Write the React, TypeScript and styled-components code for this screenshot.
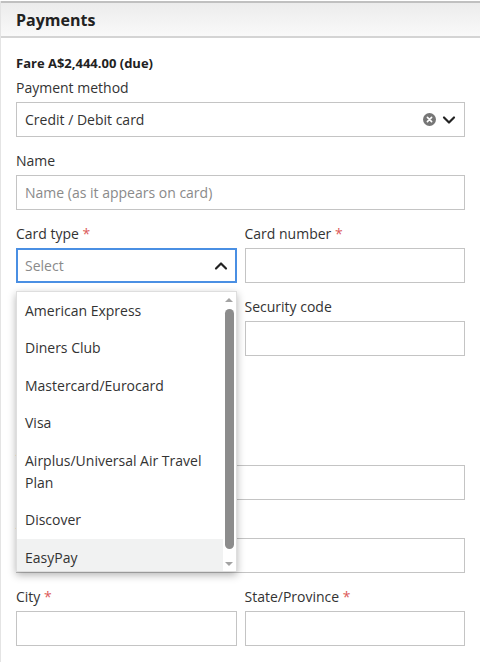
import styled, { createGlobalStyle } from "styled-components";
import { ChevronDown, ChevronUp } from "lucide-react";

const GlobalStyle = createGlobalStyle`
    body {
        margin: 0;
        background: #fff;
        font-family: "Open Sans", "Liberation Sans", sans-serif;
        color: #333;
    }
    * {
        box-sizing: border-box;
    }
`;

const Page = styled.div`
    min-height: 662px;
    border-left: 1px solid #e4e4e4;
`;

const Header = styled.div`
    margin-top: 1px;
    height: 37px;
    border-top: 2px solid #c0c0c0;
    border-bottom: 2px solid #d4d4d4;
    background: linear-gradient(#ececec, #f9f9f9);
    display: flex;
    align-items: center;
    padding-left: 15px;
`;

const Title = styled.h2`
    margin: 0;
    font-size: 16px;
    font-weight: 700;
    color: #222;
`;

const Body = styled.div`
    padding: 16px 15px 0 15px;
`;

const Fare = styled.div`
    font-size: 13px;
    font-weight: 700;
    line-height: 18px;
    color: #222;
    margin-bottom: 6px;
`;

const Form = styled.div`
    display: flex;
    flex-direction: column;
    gap: 14px;
`;

const Row = styled.div<{ $tight?: boolean }>`
    display: grid;
    grid-template-columns: 1fr 1fr;
    gap: 8px;
    margin-bottom: ${(p) => (p.$tight ? "-2px" : "0")};
`;

const Field = styled.div`
    position: relative;
    display: flex;
    flex-direction: column;
    gap: 4px;
`;

const Label = styled.label`
    font-size: 14px;
    line-height: 20px;
    color: #333;
`;

const Required = styled.span`
    color: #dc5a5a;
`;

const TextInput = styled.input`
    height: 35px;
    width: 100%;
    border: 1px solid #c4c4c4;
    padding: 0 8px;
    font-family: inherit;
    font-size: 14px;
    color: #333;
    outline: none;

    &::placeholder {
        color: #8a8a8a;
    }
`;

const SelectBox = styled.div<{ $focused?: boolean }>`
    height: 35px;
    display: flex;
    align-items: center;
    border: ${(p) => (p.$focused ? "2px solid #4a8fe3" : "1px solid #c4c4c4")};
    padding: ${(p) => (p.$focused ? "0 4px 0 7px" : "0 5px 0 8px")};
    font-size: 14px;
`;

const SelectValue = styled.span<{ $placeholder?: boolean }>`
    flex: 1;
    color: ${(p) => (p.$placeholder ? "#8a8a8a" : "#333")};
`;

const Icons = styled.div`
    display: flex;
    align-items: center;
    gap: 3px;
    color: #222;
`;

const Menu = styled.div`
    position: absolute;
    top: calc(100% + 8px);
    left: 0;
    right: 0;
    height: 281px;
    display: flex;
    background: #fff;
    border: 1px solid #dedede;
    box-shadow: 0 3px 8px rgba(0, 0, 0, 0.3);
    overflow: hidden;
    z-index: 10;
`;

const Options = styled.ul`
    flex: 1;
    margin: 0;
    padding: 0;
    list-style: none;
    overflow: hidden;
`;

const Option = styled.li<{ $active?: boolean }>`
    padding: 7.75px 8px;
    font-size: 14px;
    line-height: 22px;
    color: #333;
    background: ${(p) => (p.$active ? "#f1f2f2" : "#fff")};
`;

const Scrollbar = styled.div`
    width: 13px;
    display: flex;
    flex-direction: column;
    align-items: center;
`;

const Arrow = styled.div<{ $down?: boolean }>`
    height: 15px;
    display: flex;
    align-items: center;
    justify-content: center;

    &::after {
        content: "";
        border-left: 4px solid transparent;
        border-right: 4px solid transparent;
        ${(p) =>
            p.$down
                ? "border-top: 4px solid #a3a3a3;"
                : "border-bottom: 4px solid #a3a3a3;"}
    }
`;

const Thumb = styled.div`
    margin-top: 2px;
    width: 9px;
    height: 240px;
    border-radius: 5px;
    background: #8c8c8c;
`;

const Spacer = styled.div`
    flex: 1;
`;

const ClearIcon = () => (
    <svg width="13" height="13" viewBox="0 0 13 13">
        <circle cx="6.5" cy="6.5" r="6.5" fill="#767676" />
        <path
            d="M4.4 4.4 L8.6 8.6 M8.6 4.4 L4.4 8.6"
            stroke="#fff"
            strokeWidth="1.6"
            strokeLinecap="round"
        />
    </svg>
);

const cardTypes = [
    "American Express",
    "Diners Club",
    "Mastercard/Eurocard",
    "Visa",
    "Airplus/Universal Air Travel Plan",
    "Discover",
    "EasyPay",
    "JCB",
];

const App = () => {
    return (
        <Page>
            <GlobalStyle />
            <Header>
                <Title>Payments</Title>
            </Header>
            <Body>
                <Fare>Fare A$2,444.00 (due)</Fare>
                <Form>
                    <Field>
                        <Label>Payment method</Label>
                        <SelectBox>
                            <SelectValue>Credit / Debit card</SelectValue>
                            <Icons>
                                <ClearIcon />
                                <ChevronDown size={20} strokeWidth={2.6} />
                            </Icons>
                        </SelectBox>
                    </Field>

                    <Field>
                        <Label>Name</Label>
                        <TextInput placeholder="Name (as it appears on card)" />
                    </Field>

                    <Row>
                        <Field>
                            <Label>
                                Card type <Required>*</Required>
                            </Label>
                            <SelectBox $focused>
                                <SelectValue $placeholder>Select</SelectValue>
                                <Icons>
                                    <ChevronUp size={20} strokeWidth={2.6} />
                                </Icons>
                            </SelectBox>
                            <Menu>
                                <Options>
                                    {cardTypes.map((c) => (
                                        <Option key={c} $active={c === "EasyPay"}>
                                            {c}
                                        </Option>
                                    ))}
                                </Options>
                                <Scrollbar>
                                    <Arrow />
                                    <Thumb />
                                    <Spacer />
                                    <Arrow $down />
                                </Scrollbar>
                            </Menu>
                        </Field>
                        <Field>
                            <Label>
                                Card number <Required>*</Required>
                            </Label>
                            <TextInput />
                        </Field>
                    </Row>

                    <Row>
                        <Field>
                            <Label>
                                Expiry date <Required>*</Required>
                            </Label>
                            <TextInput />
                        </Field>
                        <Field>
                            <Label>Security code</Label>
                            <TextInput />
                        </Field>
                    </Row>

                    <Row $tight>
                        <Field>
                            <Label>Issue number</Label>
                            <TextInput />
                        </Field>
                    </Row>

                    <Field>
                        <Label>
                            Address <Required>*</Required>
                        </Label>
                        <TextInput />
                    </Field>

                    <Field>
                        <Label>Address line 2</Label>
                        <TextInput />
                    </Field>

                    <Row>
                        <Field>
                            <Label>
                                City <Required>*</Required>
                            </Label>
                            <TextInput />
                        </Field>
                        <Field>
                            <Label>
                                State/Province <Required>*</Required>
                            </Label>
                            <TextInput />
                        </Field>
                    </Row>
                </Form>
            </Body>
        </Page>
    );
};

export default App;
